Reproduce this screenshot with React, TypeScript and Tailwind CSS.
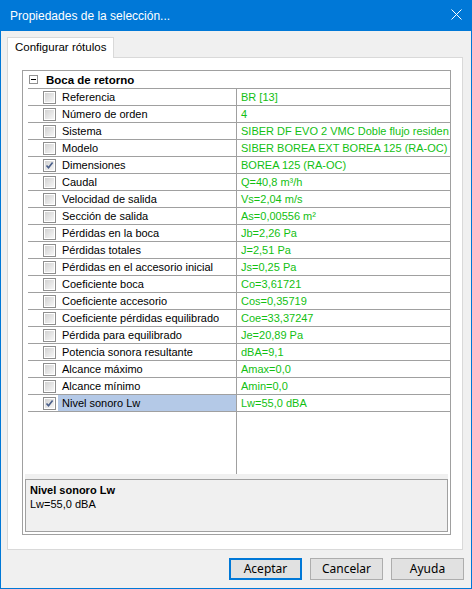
import React from "react";

type Prop = {
  label: string;
  value: string;
  checked?: boolean;
  selected?: boolean;
};

const rows: Prop[] = [
  { label: "Referencia", value: "BR [13]" },
  { label: "Número de orden", value: "4" },
  { label: "Sistema", value: "SIBER DF EVO 2 VMC Doble flujo residencial" },
  { label: "Modelo", value: "SIBER BOREA EXT BOREA 125 (RA-OC)" },
  { label: "Dimensiones", value: "BOREA 125 (RA-OC)", checked: true },
  { label: "Caudal", value: "Q=40,8 m³/h" },
  { label: "Velocidad de salida", value: "Vs=2,04 m/s" },
  { label: "Sección de salida", value: "As=0,00556 m²" },
  { label: "Pérdidas en la boca", value: "Jb=2,26 Pa" },
  { label: "Pérdidas totales", value: "J=2,51 Pa" },
  { label: "Pérdidas en el accesorio inicial", value: "Js=0,25 Pa" },
  { label: "Coeficiente boca", value: "Co=3,61721" },
  { label: "Coeficiente accesorio", value: "Cos=0,35719" },
  { label: "Coeficiente pérdidas equilibrado", value: "Coe=33,37247" },
  { label: "Pérdida para equilibrado", value: "Je=20,89 Pa" },
  { label: "Potencia sonora resultante", value: "dBA=9,1" },
  { label: "Alcance máximo", value: "Amax=0,0" },
  { label: "Alcance mínimo", value: "Amin=0,0" },
  { label: "Nivel sonoro Lw", value: "Lw=55,0 dBA", checked: true, selected: true },
];

function CheckBox({ checked }: { checked?: boolean }) {
  return (
    <div className="relative h-[13px] w-[13px] shrink-0 border border-[#8e8e8e] bg-white p-px">
      <div className="h-full w-full bg-gradient-to-br from-[#d2d2d2] to-[#f6f6f6]" />
      {checked && (
        <svg className="absolute left-0 top-0" width="11" height="11" viewBox="0 0 11 11">
          <path d="M2.5 5.5 L4.5 7.8 L8.6 2.4" fill="none" stroke="#4a5f8a" strokeWidth="1.6" />
        </svg>
      )}
    </div>
  );
}

function GridRow({ row }: { row: Prop }) {
  return (
    <div className="ml-[5px] flex h-[17px] shrink-0 border-b border-[#a0a0a0]">
      <div className="flex w-[30px] shrink-0 items-center pl-[15px]">
        <CheckBox checked={row.checked} />
      </div>
      <div
        className={`w-[178px] shrink-0 overflow-hidden whitespace-nowrap pl-[4px] leading-[16px] text-black ${
          row.selected ? "bg-[#b4c9e7]" : ""
        }`}
      >
        {row.label}
      </div>
      <div className="w-[213px] shrink-0 overflow-hidden whitespace-nowrap border-l border-[#a0a0a0] pl-[4px] leading-[16px] text-[#12c012]">
        {row.value}
      </div>
    </div>
  );
}

function Button({ label, primary }: { label: string; primary?: boolean }) {
  return (
    <button
      className={`h-[22px] w-[73px] bg-[#e1e1e1] text-[12px] leading-none text-black ${
        primary ? "border-2 border-[#0078d7]" : "border border-[#adadad]"
      }`}
    >
      {label}
    </button>
  );
}

export default function App() {
  return (
    <div
      className="flex h-[589px] w-[472px] flex-col overflow-hidden border border-t-0 border-[#0078d7] bg-[#f0f0f0]"
      style={{ fontFamily: '"Noto Sans", "Open Sans", sans-serif' }}
    >
      {/* title bar */}
      <div className="-mx-px flex h-[31px] shrink-0 items-center justify-between bg-[#0078d7] pl-[10px] pr-[10px]">
        <span
          className="text-[12px] text-white"
          style={{ fontFamily: '"Liberation Sans", Arial, sans-serif' }}
        >
          Propiedades de la selección...
        </span>
        <svg width="11" height="11" viewBox="0 0 11 11" className="mb-[2px]">
          <path d="M0.5 0.5 L10.5 10.5 M10.5 0.5 L0.5 10.5" stroke="#fff" strokeWidth="1" />
        </svg>
      </div>

      {/* tabs */}
      <div className="ml-[6px] mt-[6px] flex">
        <div
          className="relative z-10 -mb-px h-[21px] border border-b-0 border-[#d9d9d9] bg-white px-[7px] text-[11.5px] leading-[19px] text-black"
          style={{ fontFamily: '"Liberation Sans", Arial, sans-serif' }}
        >
          Configurar rótulos
        </div>
      </div>
      <div className="ml-[6px] h-[493px] w-[456px] border border-[#d9d9d9] bg-white pl-[14px] pt-[12px]">
        {/* property grid */}
        <div
          className="flex h-[465px] w-[429px] flex-col border border-[#a0a0a0] bg-white text-[11px]"
          style={{ fontFamily: '"Liberation Sans", Arial, sans-serif' }}
        >
          <div className="ml-[5px] flex h-[18px] shrink-0 items-center border-b border-[#a0a0a0]">
            <div className="ml-px flex h-[9px] w-[9px] items-center justify-center border border-[#919191] bg-white">
              <div className="h-px w-[5px] bg-black" />
            </div>
            <span className="ml-[8px] text-[11.5px] font-bold leading-[16px] text-black">Boca de retorno</span>
          </div>
          {rows.map((r) => (
            <GridRow key={r.label} row={r} />
          ))}
          <div className="flex h-[62px] shrink-0 pl-[213px]">
            <div className="flex-1 border-l border-[#a0a0a0]" />
          </div>
          <div className="mx-[2px] h-[58px] shrink-0 bg-[#f0f0f0] pt-[5px]">
            <div className="h-[53px] border border-[#a0a0a0] pl-[4px] pt-[3px] text-black">
              <div className="font-bold leading-[14px]">Nivel sonoro Lw</div>
              <div className="leading-[14px]">Lw=55,0 dBA</div>
            </div>
          </div>
        </div>
      </div>

      {/* buttons */}
      <div className="ml-[228px] mt-[8px] flex gap-[8px]">
        <Button label="Aceptar" primary />
        <Button label="Cancelar" />
        <Button label="Ayuda" />
      </div>
    </div>
  );
}
